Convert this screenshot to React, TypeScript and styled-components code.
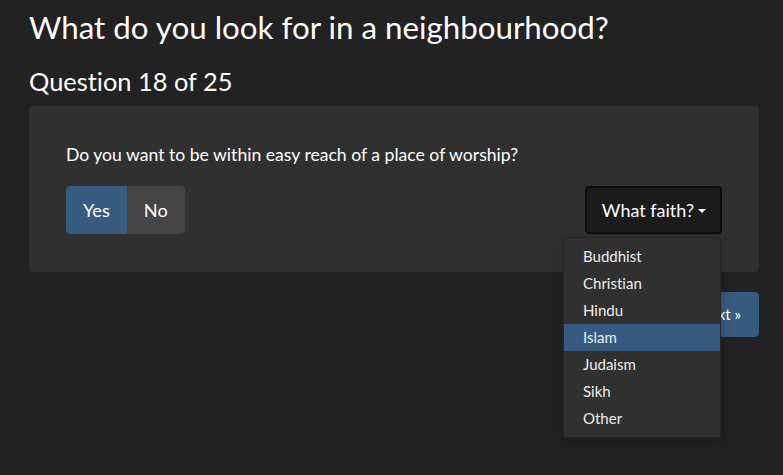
import React from "react";
import styled, { createGlobalStyle } from "styled-components";

const Global = createGlobalStyle`
  html, body { margin: 0; padding: 0; background: #222222; }
  body {
    font-family: Lato, "Open Sans", "Liberation Sans", sans-serif;
    color: #ffffff;
    font-variant-ligatures: no-common-ligatures;
  }
  * { box-sizing: border-box; }
`;

const Page = styled.div`
  width: 783px;
  min-height: 475px;
  padding: 9px 24px 0 29px;
`;

const Title = styled.h2`
  margin: 0;
  font-size: 31.3px;
  font-weight: 400;
  line-height: 1.2;
`;

const Sub = styled.h3`
  margin: 19.5px 0 0;
  font-size: 25.4px;
  font-weight: 400;
  line-height: 1.2;
`;

const Well = styled.div`
  margin-top: 9.5px;
  background: #303030;
  border-radius: 4px;
  padding: 37px 37px 38px;
`;

const Prompt = styled.p`
  margin: 0 0 19px;
  font-size: 17.6px;
  line-height: 24px;
`;

const Row = styled.div`
  display: flex;
  justify-content: space-between;
  align-items: flex-start;
`;

const Group = styled.div`
  display: flex;
`;

const Choice = styled.button<{ $active?: boolean; $first?: boolean }>`
  font-family: inherit;
  font-variant-ligatures: no-common-ligatures;
  font-size: 18.2px;
  line-height: 28px;
  padding: 9px 16px;
  height: 48px;
  color: #ffffff;
  border: 1px solid ${(p) => (p.$active ? "#375a7f" : "#444444")};
  background: ${(p) => (p.$active ? "#375a7f" : "#444444")};
  border-radius: ${(p) => (p.$first ? "4px 0 0 4px" : "0 4px 4px 0")};
  cursor: pointer;
`;

const Dropdown = styled.div`
  position: relative;
`;

const Toggle = styled.button`
  font-family: inherit;
  font-variant-ligatures: no-common-ligatures;
  font-size: 18px;
  line-height: 28px;
  height: 48px;
  padding: 8px 14px 8px 15px;
  color: #ffffff;
  background: #1b1b1b;
  border: 2px solid #0d0d0d;
  border-radius: 4px;
  display: flex;
  align-items: center;
  cursor: pointer;
`;

const Caret = styled.span`
  display: inline-block;
  width: 0;
  height: 0;
  margin-left: 4px;
  margin-top: 2px;
  border-top: 4px solid #ffffff;
  border-left: 4px solid transparent;
  border-right: 4px solid transparent;
`;

const Menu = styled.ul`
  position: absolute;
  top: calc(100% + 3px);
  right: 1px;
  width: 158px;
  margin: 0;
  padding: 5px 0;
  list-style: none;
  background: #303030;
  border: 1px solid rgba(0, 0, 0, 0.2);
  border-radius: 4px;
  box-shadow: 0 6px 12px rgba(0, 0, 0, 0.175);
  z-index: 10;
`;

const Item = styled.li<{ $active?: boolean }>`
  font-size: 15px;
  line-height: 27px;
  padding: 0 19px;
  color: #ececec;
  background: ${(p) => (p.$active ? "#375a7f" : "transparent")};
  white-space: nowrap;
`;

const Footer = styled.div`
  display: flex;
  justify-content: flex-end;
  margin-top: 20px;
`;

const Next = styled.button`
  font-family: inherit;
  font-size: 15px;
  line-height: 21px;
  height: 45px;
  padding: 11px 17px;
  color: #ffffff;
  background: #375a7f;
  border: 1px solid #375a7f;
  border-radius: 4px;
  cursor: pointer;
`;

const faiths = ["Buddhist", "Christian", "Hindu", "Islam", "Judaism", "Sikh", "Other"];

export default function App() {
  return (
    <>
      <Global />
      <Page>
        <Title>What do you look for in a neighbourhood?</Title>
        <Sub>Question 18 of 25</Sub>
        <Well>
          <Prompt>Do you want to be within easy reach of a place of worship?</Prompt>
          <Row>
            <Group>
              <Choice $active $first>Yes</Choice>
              <Choice>No</Choice>
            </Group>
            <Dropdown>
              <Toggle>
                What faith?<Caret />
              </Toggle>
              <Menu>
                {faiths.map((f) => (
                  <Item key={f} $active={f === "Islam"}>
                    {f}
                  </Item>
                ))}
              </Menu>
            </Dropdown>
          </Row>
        </Well>
        <Footer>
          <Next>Next »</Next>
        </Footer>
      </Page>
    </>
  );
}
